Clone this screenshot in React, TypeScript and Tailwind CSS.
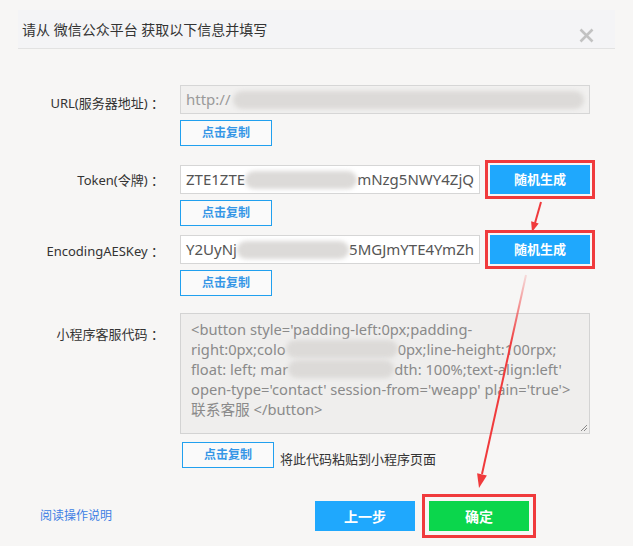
import React from 'react';

const Blur = ({ className = '' }: { className?: string }) => (
  <span className={`inline-block h-[18px] rounded-full bg-[#dcdad8] blur-[2px] ${className}`} />
);

const Label = ({ children, className = '' }: { children: React.ReactNode; className?: string }) => (
  <div className={`w-[164px] shrink-0 text-right text-[13px] text-[#333] ${className}`}>{children}</div>
);

const CopyBtn = ({ className = '' }: { className?: string }) => (
  <button className={`w-[92px] h-[26px] border border-[#21a0ef] bg-[#fafafa] text-[12px] font-semibold text-[#3596e6] ${className}`}>
    点击复制
  </button>
);

const RandomBtn = () => (
  <button className="ml-[10px] w-[100px] h-[29px] bg-[#1fa8fd] text-white text-[13px] font-semibold outline-[3px] outline-solid outline-[#f03a3c] outline-offset-[2px]">
    随机生成
  </button>
);

export default function App() {
  return (
    <div className='relative w-[633px] h-[546px] overflow-hidden bg-[#f7f6f5] pt-[10px] [font-family:"Noto_Sans","Noto_Sans_CJK_SC",sans-serif]'>
      {/* header */}
      <div className="mx-[18px] h-[39px] flex justify-between bg-[#f4f4f6] border-b border-[#e2e2e2] pl-[4px] pr-[21px]">
        <span className="self-center text-[14px] text-[#333]">请从 微信公众平台 获取以下信息并填写</span>
        <svg className="self-end mb-[5px]" width="15" height="15" viewBox="0 0 15 15">
          <path d="M1.5 1.5 13.5 13.5M13.5 1.5 1.5 13.5" stroke="#c2c2c2" strokeWidth="2.6" />
        </svg>
      </div>

      {/* URL */}
      <div className="mt-[36px] flex">
        <Label className="leading-[29px] pt-[4px]">URL(服务器地址) ：</Label>
        <div className="ml-[16px] flex flex-col gap-[6px]">
          <div className="w-[410px] h-[29px] flex items-center gap-[2px] border border-[#d6d6d6] bg-[#f1f0ef] px-[5px] text-[15px] text-[#9a9a9a]">
            <span>http://</span>
            <Blur className="flex-1" />
          </div>
          <CopyBtn />
        </div>
      </div>

      {/* Token */}
      <div className="mt-[19px] flex">
        <Label className="leading-[29px] pt-[1px]">Token(令牌) ：</Label>
        <div className="ml-[16px] flex flex-col gap-[6px]">
          <div className="flex">
            <div className="w-[300px] h-[29px] flex items-center border border-[#d6d6d6] bg-white px-[5px] text-[15px] text-[#555]">
              <span>ZTE1ZTE</span>
              <Blur className="flex-1" />
              <span>mNzg5NWY4ZjQ</span>
            </div>
            <RandomBtn />
          </div>
          <CopyBtn />
        </div>
      </div>

      {/* EncodingAESKey */}
      <div className="mt-[9px] flex">
        <Label className="leading-[29px] pt-[2px]">EncodingAESKey ：</Label>
        <div className="ml-[16px] flex flex-col gap-[6px]">
          <div className="flex">
            <div className="w-[300px] h-[29px] flex items-center border border-[#d6d6d6] bg-white px-[5px] text-[15px] text-[#555]">
              <span>Y2UyNj</span>
              <Blur className="flex-1" />
              <span>5MGJmYTE4YmZh</span>
            </div>
            <RandomBtn />
          </div>
          <CopyBtn />
        </div>
      </div>

      {/* mini program code */}
      <div className="mt-[17px] flex">
        <Label className="pt-[12px]">小程序客服代码 ：</Label>
        <div className="ml-[16px] flex flex-col">
          <div className="relative w-[410px] h-[121px] border border-[#d3d3d3] bg-[#efeeed] px-[10px] pt-[5px] text-[14.7px] leading-[20px] text-[#8a8a8a] whitespace-nowrap">
            <div>&lt;button style='padding-left:0px;padding-</div>
            <div className="flex items-center">
              <span>right:0px;colo</span>
              <Blur className="w-[112px]" />
              <span>0px;line-height:100rpx;</span>
            </div>
            <div className="flex items-center">
              <span>float: left; mar</span>
              <Blur className="w-[106px]" />
              <span>dth: 100%;text-align:left'</span>
            </div>
            <div>open-type='contact' session-from='weapp' plain='true'&gt;</div>
            <div>联系客服 &lt;/button&gt;</div>
            <svg className="absolute right-[1px] bottom-[1px]" width="8" height="8" viewBox="0 0 8 8">
              <path d="M1 7 7 1M4 7 7 4" stroke="#8a8a8a" strokeWidth="1" />
            </svg>
          </div>
          <div className="mt-[8px] ml-[2px] flex items-end gap-[6px]">
            <CopyBtn className="h-[24px]" />
            <span className="text-[13px] text-[#333] leading-[16px] mb-[1px]">将此代码粘贴到小程序页面</span>
          </div>
        </div>
      </div>

      {/* footer */}
      <div className="mt-[33px] flex items-center pl-[40px]">
        <a className="text-[12px] text-[#3d7fe4]">阅读操作说明</a>
        <div className="ml-auto mr-[104px] flex gap-[14px]">
          <button className="w-[100px] h-[30px] bg-[#1fa8fd] text-white text-[14px] font-semibold">上一步</button>
          <button className="w-[100px] h-[30px] bg-[#0bd64c] text-white text-[14px] font-semibold outline-[3px] outline-solid outline-[#f03a3c] outline-offset-[4px]">
            确定
          </button>
        </div>
      </div>

      {/* annotation arrows */}
      <svg className="pointer-events-none absolute inset-0" width="633" height="546" viewBox="0 0 633 546">
        <defs>
          <linearGradient id="fade" gradientUnits="userSpaceOnUse" x1="526" y1="275" x2="482" y2="474">
            <stop offset="0" stopColor="#f03a3c" stopOpacity="0.15" />
            <stop offset="0.35" stopColor="#f03a3c" stopOpacity="1" />
          </linearGradient>
        </defs>
        <path d="M541 202 535 223" stroke="#f03a3c" strokeWidth="2" />
        <polygon points="532,232 538.7,223.6 531.1,221.3" fill="#f03a3c" />
        <path d="M526 275 482 474" stroke="url(#fade)" strokeWidth="2" />
        <polygon points="479,488 486.9,475.4 477.1,473.2" fill="#f03a3c" />
      </svg>
    </div>
  );
}
